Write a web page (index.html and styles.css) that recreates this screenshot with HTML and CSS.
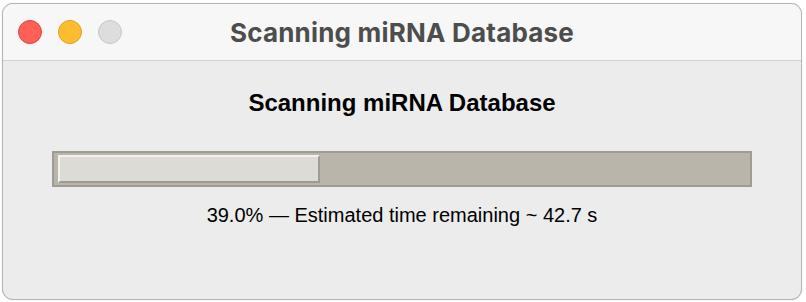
FILE: index.html
```html
<!DOCTYPE html>
<html>
<head>
<meta charset="utf-8">
<link rel="stylesheet" href="styles.css">
</head>
<body>
<div class="window">
  <div class="titlebar">
    <div class="lights">
      <span class="light red"></span>
      <span class="light yellow"></span>
      <span class="light gray"></span>
    </div>
    <div class="title">Scanning miRNA Database</div>
  </div>
  <div class="content">
    <h1 class="heading">Scanning miRNA Database</h1>
    <div class="progress">
      <div class="chunk" style="width: 262px"></div>
    </div>
    <div class="status">39.0% — Estimated time remaining ~ 42.7 s</div>
  </div>
</div>
</body>
</html>
```
FILE: styles.css
```css
html, body {
  margin: 0;
  padding: 0;
  background: #ffffff;
}
body {
  padding: 3px 4px 2px 2px;
  width: 806px;
  height: 302px;
  box-sizing: border-box;
}
.window {
  width: 800px;
  height: 297px;
  box-sizing: border-box;
  border: 1px solid #b4b4b4;
  border-radius: 11px;
  background: #ececec;
  overflow: hidden;
  box-shadow: 0 0 1px rgba(0,0,0,0.25);
}
.titlebar {
  position: relative;
  height: 57px;
  box-sizing: border-box;
  background: #f6f7f6;
  border-bottom: 1px solid #d2d2d2;
  display: flex;
  align-items: center;
  justify-content: center;
}
.lights {
  position: absolute;
  left: 15px;
  top: 16px;
  display: flex;
  gap: 16px;
}
.light {
  width: 24px;
  height: 24px;
  border-radius: 50%;
  box-sizing: border-box;
}
.red { background: #fe5f57; border: 1px solid #e0443e; }
.yellow { background: #febc2e; border: 1px solid #dea123; }
.gray { background: #dddddd; border: 1px solid #c8c8c8; }
.title {
  font-family: Inter, "Open Sans", sans-serif;
  font-weight: 700;
  font-size: 26px;
  letter-spacing: 0.2px;
  color: #4d4d4d;
  margin-top: 0;
}
.content {
  display: flex;
  flex-direction: column;
  align-items: center;
  padding-top: 28px;
}
.heading {
  margin: 0;
  font-family: "Liberation Sans", Arial, sans-serif;
  font-weight: 700;
  font-size: 24px;
  line-height: 28px;
  color: #000;
}
.progress {
  margin-top: 34px;
  width: 700px;
  height: 36px;
  box-sizing: border-box;
  background: #b9b5ab;
  border: 2px solid #a19c93;
  padding: 2px 4px;
  display: flex;
}
.chunk {
  height: 28px;
  box-sizing: border-box;
  background: #dcdbd6;
  border-top: 2px solid #f2f1ed;
  border-left: 2px solid #f2f1ed;
  border-right: 2px solid #a09b92;
  border-bottom: 2px solid #a09b92;
}
.status {
  margin-top: 16px;
  font-family: "Liberation Sans", Arial, sans-serif;
  font-size: 20px;
  line-height: 24px;
  color: #000;
}
```
